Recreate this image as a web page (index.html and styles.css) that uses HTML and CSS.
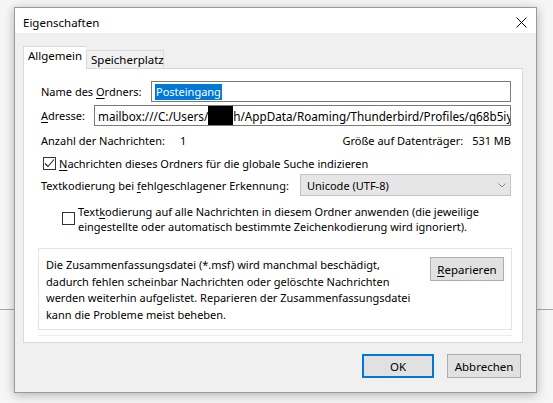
FILE: index.html
```html
<!DOCTYPE html>
<html lang="de">
<head>
<meta charset="utf-8">
<title>Eigenschaften</title>
<link rel="stylesheet" href="styles.css">
</head>
<body>
<div class="win">
  <div class="titlebar">
    <span class="title">Eigenschaften</span>
    <svg class="close" width="11" height="11" viewBox="0 0 11 11"><path d="M0.5 0.5 L10.5 10.5 M10.5 0.5 L0.5 10.5" stroke="#000" stroke-width="1" fill="none"/></svg>
  </div>
  <div class="client">
    <div class="tabs">
      <div class="tab sel">Allgemein</div>
      <div class="tab">Speicherplatz</div>
    </div>
    <div class="panel">
      <div class="row r-name">
        <label class="lbl lbl-name">Name des <u>O</u>rdners:</label>
        <div class="input in-name"><span class="selected">Posteingang</span></div>
      </div>
      <div class="row r-addr">
        <label class="lbl lbl-addr"><u>A</u>dresse:</label>
        <div class="input in-addr"><span class="addr">mailbox:///C:/Users/<span class="redact"></span>h/AppData/Roaming/Thunderbird/Profiles/q68b5iy.default/Mail/Local Folders/Inbox</span></div>
      </div>
      <div class="row r-info">
        <div class="info-l"><span class="lbl-count">Anzahl der Nachrichten:</span><span>1</span></div>
        <div class="info-r"><span>Größe auf Datenträger:</span><span class="size">531 MB</span></div>
      </div>
      <div class="row r-check">
        <span class="cb checked"><svg width="11" height="11" viewBox="0 0 11 11"><path d="M1 5.5 L4 8.5 L10 1.5" stroke="#222" stroke-width="1.1" fill="none"/></svg></span>
        <span><u>N</u>achrichten dieses Ordners für die globale Suche indizieren</span>
      </div>
      <div class="row r-enc">
        <label class="lbl lbl-enc">Textkodierung bei <u>f</u>ehlgeschlagener Erkennung:</label>
        <div class="select"><span>Unicode (UTF-8)</span><svg width="8" height="5" viewBox="0 0 8 5"><path d="M0.5 0.5 L4 4 L7.5 0.5" stroke="#888" stroke-width="1" fill="none"/></svg></div>
      </div>
      <div class="r-check2">
        <span class="cb"></span>
        <span class="cb2-text">Text<u>k</u>odierung auf alle Nachrichten in diesem Ordner anwenden (die jeweilige<br>eingestellte oder automatisch bestimmte Zeichenkodierung wird ignoriert).</span>
      </div>
      <div class="group">
        <p class="group-text">Die Zusammenfassungsdatei (*.msf) wird manchmal beschädigt,<br>dadurch fehlen scheinbar Nachrichten oder gelöschte Nachrichten<br>werden weiterhin aufgelistet. Reparieren der Zusammenfassungsdatei<br>kann die Probleme meist beheben.</p>
        <button class="btn btn-repair"><u>R</u>eparieren</button>
      </div>
      <div class="sep"></div>
    </div>
    <div class="buttons">
      <button class="btn btn-ok">OK</button>
      <button class="btn btn-cancel">Abbrechen</button>
    </div>
  </div>
</div>
</body>
</html>
```
FILE: styles.css
```css
* { box-sizing: border-box; }
html, body { margin: 0; padding: 0; }
body {
  width: 553px;
  height: 403px;
  overflow: hidden;
  font-family: "Noto Sans", "Open Sans", sans-serif;
  font-size: 11px;
  color: #000;
  background:
    linear-gradient(to bottom, transparent 309px, #a8a8a8 309px, #a8a8a8 310px, transparent 310px),
    #f6f6f6;
  padding-top: 7px;
  padding-left: 14px;
}
u { text-decoration: underline; text-underline-offset: 2px; }

.win {
  width: 523px;
  height: 386px;
  border: 1px solid #9a9a9a;
  box-shadow: 0 2px 10px rgba(0,0,0,0.28);
  display: flex;
  flex-direction: column;
  background: #f0f0f0;
}
.titlebar {
  height: 25px;
  background: #fff;
  display: flex;
  align-items: center;
  justify-content: space-between;
  padding: 3px 9px 0 8px;
}
.title { font-size: 11.5px; }
.close { display: block; }

.client {
  flex: 1;
  padding: 13px 13px 0 8px;
  display: flex;
  flex-direction: column;
}
.tabs {
  display: flex;
  align-items: flex-end;
  height: 22px;
}
.tab {
  height: 18px;
  border: 1px solid #d9d9d9;
  border-bottom: none;
  background: #f0f0f0;
  padding: 0 4px;
  line-height: 17px;
  font-size: 11.5px;
}
.tab.sel {
  height: 23px;
  background: #fff;
  position: relative;
  z-index: 1;
  margin-bottom: -1px;
  width: 63px;
  padding-left: 4px;
  line-height: 18px;
  border-right: none;
}
.tab:not(.sel) { width: 78px; }

.panel {
  width: 500px;
  height: 275px;
  border: 1px solid #d9d9d9;
  background: #fff;
  padding: 0 11px 0 17px;
  display: flex;
  flex-direction: column;
}
.row {
  display: flex;
  align-items: center;
}
.lbl { flex: none; }
.r-name { margin-top: 12px; height: 21px; }
.lbl-name { width: 110px; }
.input {
  flex: 1;
  height: 21px;
  border: 1px solid #7a7a7a;
  background: #fff;
  display: flex;
  align-items: center;
  overflow: hidden;
  white-space: nowrap;
}
.in-name { padding-left: 3px; }
.selected {
  background: #0078d7;
  color: #fff;
  padding: 0 1px;
  line-height: 16px;
}
.r-addr { margin-top: 3px; height: 21px; }
.lbl-addr { width: 53px; }
.in-addr { padding-left: 3px; }
.addr { display: inline-flex; align-items: center; font-size: 11.7px; }
.redact {
  display: inline-block;
  width: 25px;
  height: 19px;
  background: #000;
}

.r-info {
  margin-top: 6px;
  height: 16px;
  justify-content: space-between;
}
.lbl-count { display: inline-block; width: 139px; }
.info-r .size { margin-left: 9px; }

.r-check { margin-top: 7px; height: 16px; }
.cb {
  flex: none;
  width: 13px;
  height: 13px;
  border: 1px solid #333;
  background: #fff;
  display: flex;
  align-items: center;
  justify-content: center;
}
.r-check .cb { margin-left: 2px; margin-right: 3px; }

.r-enc { margin-top: 3px; height: 22px; }
.lbl-enc { width: 259px; }
.select {
  width: 211px;
  height: 22px;
  border: 1px solid #c4c4c4;
  background: #e6e6e6;
  display: flex;
  align-items: center;
  justify-content: space-between;
  padding: 0 4px 0 6px;
}

.r-check2 {
  margin-top: 8px;
  display: flex;
  align-items: flex-start;
  padding-left: 21px;
}
.r-check2 .cb { margin-top: 8px; margin-right: 3px; }
.cb2-text { line-height: 15px; white-space: nowrap; }

.group {
  margin-top: 14px;
  margin-left: -3px;
  width: 474px;
  height: 82px;
  border: 1px solid #e3e3e3;
  display: flex;
  justify-content: space-between;
  align-items: flex-start;
  padding: 8px 7px 0 7px;
}
.group-text {
  margin: 0;
  line-height: 16.5px;
  white-space: nowrap;
}
.sep {
  margin-left: -3px;
  width: 474px;
  height: 1px;
  background: #ececec;
  margin-top: 5px;
}

.btn {
  font-family: inherit;
  font-size: 11.5px;
  color: #000;
  background: #e1e1e1;
  border: 1px solid #adadad;
  padding: 0;
  margin: 0;
}
.btn-repair { width: 74px; height: 24px; margin-top: 0; }

.buttons {
  display: flex;
  justify-content: flex-end;
  gap: 13px;
  margin-top: 11px;
  padding-right: 2px;
}
.btn-ok {
  width: 72px;
  height: 24px;
  border: 2px solid #0078d7;
}
.btn-cancel { width: 74px; height: 24px; }
```
